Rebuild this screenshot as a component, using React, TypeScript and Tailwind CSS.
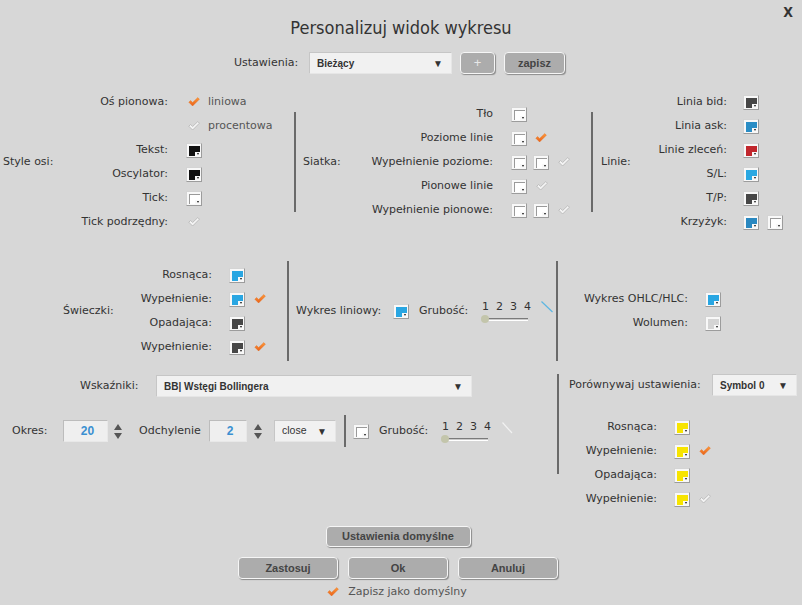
import React from "react";

function Check({ on }: { on?: boolean }) {
  return (
    <svg width="12" height="10" viewBox="0 0 12 10" className="shrink-0 block">
      <defs>
        <linearGradient id="og" x1="0" y1="0" x2="0" y2="1">
          <stop offset="0" stopColor="#ff9a3a" />
          <stop offset="1" stopColor="#e8601a" />
        </linearGradient>
      </defs>
      <path
        d="M0.8 5.2 L2.6 3.5 L4.6 5.5 L9.8 0.6 L11.4 2.2 L4.6 9 Z"
        fill={on ? "url(#og)" : "#f4f4f4"}
        stroke={on ? "#e26a18" : "#b4b4b4"}
        strokeWidth={on ? 0.4 : 0.8}
        strokeLinejoin="round"
      />
    </svg>
  );
}

function Swatch({ fill }: { fill: string }) {
  return (
    <div className="relative w-[16px] h-[15px] shrink-0 bg-[#f8f8f8] border border-[#d4d4d4] border-r-[#9c9c9c] border-b-[#9c9c9c]">
      <div className={"absolute left-[2px] top-[2px] right-[1px] bottom-[1px] " + fill} />
      <div className="absolute right-[1px] bottom-[1px] w-[5px] h-[4px] bg-[#f8f8f8] flex items-center justify-center">
        <div className="w-0 h-0 border-x-[1.5px] border-x-transparent border-t-[2px] border-t-[#111]" />
      </div>
    </div>
  );
}

const WHITE = "bg-white border-l border-t border-[#9a9a9a]";

function Row({
  label,
  lw,
  gap,
  children,
}: {
  label: string;
  lw: string;
  gap: string;
  children?: React.ReactNode;
}) {
  return (
    <div className="h-[24px] flex items-center">
      <div className={"text-right whitespace-nowrap " + lw}>{label}</div>
      <div className={"flex items-center " + gap}>{children}</div>
    </div>
  );
}

function Sep({ h }: { h: string }) {
  return <div className={"w-[2px] shrink-0 bg-[#6a6a6a] " + h} />;
}

function Slider() {
  return (
    <div className="flex flex-col w-[48px]">
      <div className="flex gap-[7px] text-[11px] leading-[12px] text-[#333]">
        <span>1</span>
        <span>2</span>
        <span>3</span>
        <span>4</span>
      </div>
      <div className="relative mt-[5px] h-[3px] w-[46px] border-t border-[#7a7a7a] border-b border-b-white bg-[#c9c9c9]">
        <div className="absolute left-[-1px] top-[-4px] w-[8px] h-[8px] rounded-full bg-[#c3c5ab]" />
      </div>
    </div>
  );
}

function Spinner() {
  return (
    <div className="flex flex-col gap-[3px]">
      <div className="w-0 h-0 border-x-[4px] border-x-transparent border-b-[6px] border-b-[#555]" />
      <div className="w-0 h-0 border-x-[4px] border-x-transparent border-t-[6px] border-t-[#555]" />
    </div>
  );
}

function Btn({ cls, children }: { cls: string; children: React.ReactNode }) {
  return (
    <div
      className={
        "flex items-center justify-center rounded-[4px] bg-[#acacac] border-[1.5px] border-[#f6f6f6] shadow-[1px_1px_1px_#8c8c8c] font-['Liberation_Sans',sans-serif] font-bold text-[11px] text-[#444] " +
        cls
      }
    >
      {children}
    </div>
  );
}

function Select({ cls, text, bold }: { cls: string; text: string; bold?: boolean }) {
  return (
    <div
      className={
        "h-[22px] bg-[#f1f1f1] border border-[#e6e6e6] border-t-[#c6c6c6] border-l-[#c6c6c6] flex items-center justify-between pr-[8px] font-['Liberation_Sans',sans-serif] text-[#333] " +
        (bold ? "font-bold text-[10px] pl-[7px] " : "text-[10.5px] pl-[7px] ") +
        cls
      }
    >
      <span>{text}</span>
      <span className="text-[10px] text-[#333]">▼</span>
    </div>
  );
}

function NumInput({ cls, v }: { cls: string; v: string }) {
  return (
    <div
      className={
        "h-[22px] bg-[#efefef] border border-[#e8e8e8] border-t-[#bcbcbc] border-l-[#bcbcbc] flex items-center justify-center pl-[4px] font-['Liberation_Sans',sans-serif] font-bold text-[12px] text-[#3b8fd1] " +
        cls
      }
    >
      {v}
    </div>
  );
}

export default function App() {
  return (
    <div className="relative w-[802px] h-[605px] overflow-hidden bg-[#d7d7d7] text-[11px] text-[#333] font-['DejaVu_Sans',sans-serif]">
      <div className="absolute top-[4px] right-[9px] text-[14px] leading-[16px] font-bold font-['DejaVu_Sans_Condensed','DejaVu_Sans',sans-serif] font-stretch-condensed text-[#333]">
        X
      </div>

      <div className="pt-[16px] h-[44px] text-center text-[18px] leading-[24px] font-['DejaVu_Sans_Condensed','DejaVu_Sans',sans-serif] font-stretch-condensed font-light text-[#333]">
        Personalizuj widok wykresu
      </div>

      <div className="mt-[8px] h-[22px] flex items-center pl-[234px]">
        <div className="w-[75px]">Ustawienia:</div>
        <Select cls="w-[143px]" text="Bieżący" bold />
        <Btn cls="ml-[8px] w-[35px] h-[22px] !font-normal !text-[#e8e8e8] !text-[13px]">+</Btn>
        <Btn cls="ml-[9px] w-[61px] h-[22px]">zapisz</Btn>
      </div>

      {/* Section 1 */}
      <div className="mt-[15px] h-[146px] flex items-center">
        <div className="w-[294px] flex items-center">
          <div className="w-[60px] pl-[3px]">Style osi:</div>
          <div className="flex flex-col">
            <Row label="Oś pionowa:" lw="w-[108px]" gap="ml-[20px]">
              <Check on />
              <span className="ml-[8px] text-[#555]">liniowa</span>
            </Row>
            <Row label="" lw="w-[108px]" gap="ml-[20px]">
              <Check />
              <span className="ml-[8px] text-[#555]">procentowa</span>
            </Row>
            <Row label="Tekst:" lw="w-[108px]" gap="ml-[18px]">
              <Swatch fill="bg-[#111]" />
            </Row>
            <Row label="Oscylator:" lw="w-[108px]" gap="ml-[18px]">
              <Swatch fill="bg-[#111]" />
            </Row>
            <Row label="Tick:" lw="w-[108px]" gap="ml-[18px]">
              <Swatch fill={WHITE} />
            </Row>
            <Row label="Tick podrzędny:" lw="w-[108px]" gap="ml-[20px]">
              <Check />
            </Row>
          </div>
        </div>
        <Sep h="h-[100px]" />
        <div className="w-[295px] pl-[7px] flex items-center">
          <div className="w-[57px]">Siatka:</div>
          <div className="flex flex-col">
            <Row label="Tło" lw="w-[133px]" gap="ml-[18px]">
              <Swatch fill={WHITE} />
            </Row>
            <Row label="Poziome linie" lw="w-[133px]" gap="ml-[18px]">
              <Swatch fill={WHITE} />
              <span className="ml-[8px]">
                <Check on />
              </span>
            </Row>
            <Row label="Wypełnienie poziome:" lw="w-[133px]" gap="ml-[18px]">
              <Swatch fill={WHITE} />
              <span className="ml-[6px]">
                <Swatch fill={WHITE} />
              </span>
              <span className="ml-[9px]">
                <Check />
              </span>
            </Row>
            <Row label="Pionowe linie" lw="w-[133px]" gap="ml-[18px]">
              <Swatch fill={WHITE} />
              <span className="ml-[9px]">
                <Check />
              </span>
            </Row>
            <Row label="Wypełnienie pionowe:" lw="w-[133px]" gap="ml-[18px]">
              <Swatch fill={WHITE} />
              <span className="ml-[6px]">
                <Swatch fill={WHITE} />
              </span>
              <span className="ml-[9px]">
                <Check />
              </span>
            </Row>
          </div>
        </div>
        <Sep h="h-[100px]" />
        <div className="flex-1 pl-[8px] flex items-center">
          <div className="w-[40px]">Linie:</div>
          <div className="flex flex-col">
            <Row label="Linia bid:" lw="w-[86px]" gap="ml-[16px]">
              <Swatch fill="bg-[#474747]" />
            </Row>
            <Row label="Linia ask:" lw="w-[86px]" gap="ml-[16px]">
              <Swatch fill="bg-[#2a8dc5]" />
            </Row>
            <Row label="Linie zleceń:" lw="w-[86px]" gap="ml-[16px]">
              <Swatch fill="bg-[#c1272d]" />
            </Row>
            <Row label="S/L:" lw="w-[86px]" gap="ml-[16px]">
              <Swatch fill="bg-[#2aa8e2]" />
            </Row>
            <Row label="T/P:" lw="w-[86px]" gap="ml-[16px]">
              <Swatch fill="bg-[#474747]" />
            </Row>
            <Row label="Krzyżyk:" lw="w-[86px]" gap="ml-[16px]">
              <Swatch fill="bg-[#2a88c0]" />
              <span className="ml-[8px]">
                <Swatch fill={WHITE} />
              </span>
            </Row>
          </div>
        </div>
      </div>

      {/* Section 2 */}
      <div className="mt-[26px] h-[100px] flex items-center">
        <div className="w-[287px] pl-[63px] flex items-center">
          <div className="w-[70px]">Świeczki:</div>
          <div className="flex flex-col">
            <Row label="Rosnąca:" lw="w-[79px]" gap="ml-[17px]">
              <Swatch fill="bg-[#29a6e2]" />
            </Row>
            <Row label="Wypełnienie:" lw="w-[79px]" gap="ml-[17px]">
              <Swatch fill="bg-[#29a6e2]" />
              <span className="ml-[9px]">
                <Check on />
              </span>
            </Row>
            <Row label="Opadająca:" lw="w-[79px]" gap="ml-[17px]">
              <Swatch fill="bg-[#474747]" />
            </Row>
            <Row label="Wypełnienie:" lw="w-[79px]" gap="ml-[17px]">
              <Swatch fill="bg-[#474747]" />
              <span className="ml-[9px]">
                <Check on />
              </span>
            </Row>
          </div>
        </div>
        <Sep h="h-[100px]" />
        <div className="w-[267px] pl-[7px] flex items-center">
          <div className="w-[97px] whitespace-nowrap">Wykres liniowy:</div>
          <Swatch fill="bg-[#29a6e2]" />
          <div className="ml-[10px] w-[63px]">Grubość:</div>
          <Slider />
          <svg width="12" height="12" viewBox="0 0 12 12" className="ml-[11px] mt-[-8px]">
            <line x1="0.5" y1="0.5" x2="11.5" y2="11" stroke="#5cb6e2" strokeWidth="1.2" />
          </svg>
        </div>
        <Sep h="h-[100px]" />
        <div className="flex-1 pl-[24px] flex flex-col">
          <Row label="Wykres OHLC/HLC:" lw="w-[106px]" gap="ml-[17px]">
            <Swatch fill="bg-[#29a6e2]" />
          </Row>
          <Row label="Wolumen:" lw="w-[106px]" gap="ml-[17px]">
            <Swatch fill="bg-[#d4d4d4]" />
          </Row>
        </div>
      </div>

      {/* Section 3 */}
      <div className="mt-[13px] flex">
        <div className="w-[557px] flex flex-col">
          <div className="mt-[1px] h-[22px] flex items-center pl-[80px]">
            <div className="w-[76px]">Wskaźniki:</div>
            <Select cls="w-[316px]" text="BB| Wstęgi Bollingera" bold />
          </div>
          <div className="mt-[23px] h-[22px] flex items-center pl-[12px]">
            <div className="w-[51px]">Okres:</div>
            <NumInput cls="w-[45px]" v="20" />
            <div className="ml-[6px]">
              <Spinner />
            </div>
            <div className="ml-[17px] w-[70px]">Odchylenie</div>
            <NumInput cls="w-[38px]" v="2" />
            <div className="ml-[7px]">
              <Spinner />
            </div>
            <Select cls="ml-[12px] w-[62px]" text="close" />
            <div className="ml-[8px]">
              <Sep h="h-[32px]" />
            </div>
            <div className="ml-[7px]">
              <Swatch fill={WHITE} />
            </div>
            <div className="ml-[10px] w-[63px]">Grubość:</div>
            <Slider />
            <svg width="12" height="12" viewBox="0 0 12 12" className="ml-[12px] mt-[-6px]">
              <line x1="0.5" y1="0.5" x2="10" y2="11" stroke="#f2f2f2" strokeWidth="1.2" />
            </svg>
          </div>
        </div>
        <Sep h="h-[100px]" />
        <div className="flex-1 pl-[10px] flex flex-col">
          <div className="h-[22px] flex items-center">
            <div className="w-[143px] whitespace-nowrap">Porównywaj ustawienia:</div>
            <Select cls="w-[85px]" text="Symbol 0" bold />
          </div>
          <div className="mt-[19px] flex flex-col">
            <Row label="Rosnąca:" lw="w-[88px]" gap="ml-[17px]">
              <Swatch fill="bg-[#f7e400]" />
            </Row>
            <Row label="Wypełnienie:" lw="w-[88px]" gap="ml-[17px]">
              <Swatch fill="bg-[#f7e400]" />
              <span className="ml-[9px]">
                <Check on />
              </span>
            </Row>
            <Row label="Opadająca:" lw="w-[88px]" gap="ml-[17px]">
              <Swatch fill="bg-[#f7e400]" />
            </Row>
            <Row label="Wypełnienie:" lw="w-[88px]" gap="ml-[17px]">
              <Swatch fill="bg-[#f7e400]" />
              <span className="ml-[9px]">
                <Check />
              </span>
            </Row>
          </div>
        </div>
      </div>

      {/* Bottom */}
      <div className="mt-[15px] flex flex-col items-center pr-[6px]">
        <Btn cls="w-[145px] h-[21px]">Ustawienia domyślne</Btn>
        <div className="mt-[10px] flex gap-[10px]">
          <Btn cls="w-[100px] h-[22px]">Zastosuj</Btn>
          <Btn cls="w-[100px] h-[22px]">Ok</Btn>
          <Btn cls="w-[100px] h-[22px]">Anuluj</Btn>
        </div>
        <div className="mt-[6px] h-[14px] flex items-center pr-[2px]">
          <Check on />
          <span className="ml-[9px] text-[#555]">Zapisz jako domyślny</span>
        </div>
      </div>
    </div>
  );
}
